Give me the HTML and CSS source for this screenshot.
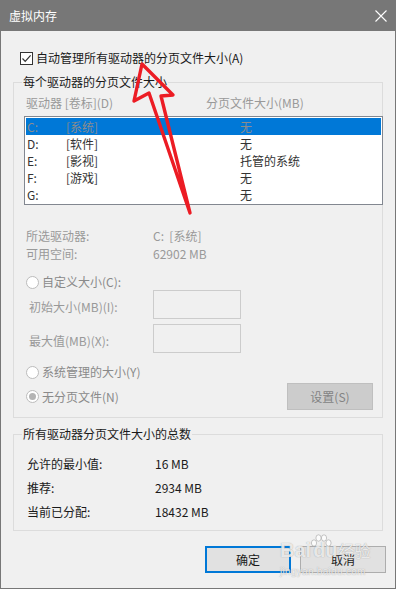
FILE: index.html
```html
<!DOCTYPE html>
<html lang="zh-CN">
	<head>
		<meta http-equiv="Content-Type" content="text/html; charset=utf-8" />
		<title>虚拟内存</title>
		<link rel="stylesheet" href="styles.css">
	</head>

	<body>
		<div class="window">
			<div class="titlebar">
				<span class="title">虚拟内存</span>
				<svg class="close" width="12" height="12" viewBox="0 0 12 12">
					<path d="M0.5 0.5 L11.5 11.5 M11.5 0.5 L0.5 11.5" stroke="#fff" stroke-width="1.1" fill="none" />
				</svg>
			</div>

			<div class="content">
				<label class="auto">
					<span class="checkbox">
						<svg width="11" height="11" viewBox="0 0 11 11">
							<path d="M1.5 5.5 L4.2 8.3 L9.6 2.3" stroke="#333" stroke-width="1.2" fill="none" />
						</svg>
					</span>
					自动管理所有驱动器的分页文件大小(A)
				</label>

				<!-- Per drive -->
				<fieldset class="group drives">
					<legend>每个驱动器的分页文件大小</legend>

					<div class="head">
						<span class="head-drive">驱动器 [卷标](D)</span>
						<span>分页文件大小(MB)</span>
					</div>

					<div class="listbox">
						<div class="row selected"><span class="c-drive">C:</span><span class="c-label">[系统]</span><span>无</span></div>
						<div class="row"><span class="c-drive">D:</span><span class="c-label">[软件]</span><span>无</span></div>
						<div class="row"><span class="c-drive">E:</span><span class="c-label">[影视]</span><span>托管的系统</span></div>
						<div class="row"><span class="c-drive">F:</span><span class="c-label">[游戏]</span><span>无</span></div>
						<div class="row"><span class="c-drive">G:</span><span class="c-label"></span><span>无</span></div>
					</div>

					<div class="info first"><span class="info-key">所选驱动器:</span><span>C:&nbsp;&nbsp;[系统]</span></div>
					<div class="info"><span class="info-key">可用空间:</span><span>62902 MB</span></div>

					<div class="radio-row custom"><span class="radio"></span>自定义大小(C):</div>
					<div class="size-row first"><span class="size-key">初始大小(MB)(I):</span><span class="textbox"></span></div>
					<div class="size-row"><span class="size-key">最大值(MB)(X):</span><span class="textbox"></span></div>
					<div class="radio-row managed"><span class="radio"></span>系统管理的大小(Y)</div>
					<div class="radio-row none">
						<span class="radio checked"></span>无分页文件(N)
						<span class="btn set">设置(S)</span>
					</div>
				</fieldset>

				<!-- Totals -->
				<fieldset class="group totals">
					<legend>所有驱动器分页文件大小的总数</legend>
					<div class="total"><span class="total-key">允许的最小值:</span><span>16 MB</span></div>
					<div class="total"><span class="total-key">推荐:</span><span>2934 MB</span></div>
					<div class="total"><span class="total-key">当前已分配:</span><span>18432 MB</span></div>
				</fieldset>

				<div class="buttons">
					<span class="btn ok">确定</span>
					<span class="btn">取消</span>
				</div>
			</div>

			<!-- red arrow drawn over the shot -->
			<svg class="arrow" width="396" height="589" viewBox="0 0 396 589">
				<path d="M142 64 L134 101 L149 93 L190 213 L161 96 L173 95 Z" stroke="#ec1c24" stroke-width="3.4" stroke-linejoin="round" fill="none" />
			</svg>

			<!-- watermark -->
			<div class="watermark">
				<div class="wm-line">
					<span>Bai</span>
					<svg class="paw" width="24" height="22" viewBox="0 0 24 22">
						<g fill="rgba(255,255,255,0.8)" stroke="rgba(140,140,140,0.6)" stroke-width="0.8">
							<ellipse cx="5" cy="9" rx="2.6" ry="3.2" />
							<ellipse cx="9.5" cy="4" rx="2.6" ry="3.2" />
							<ellipse cx="15" cy="4" rx="2.6" ry="3.2" />
							<ellipse cx="19.5" cy="9" rx="2.6" ry="3.2" />
						</g>
					</svg>
					<span class="wm-du">du</span>
					<span class="wm-cn">经验</span>
				</div>
				<div class="wm-url">jingyan.baidu.com</div>
			</div>
		</div>
	</body>
</html>
```

FILE: styles.css
```css
body {
	margin: 0;
}
.window {
	background-color: #f0f0f0;
	border: 1px solid #777;
	border-top: 0;
	box-sizing: border-box;
	color: #1a1a1a;
	font-family: "Noto Sans CJK SC", "Liberation Sans", sans-serif;
	font-size: 12px;
	height: 589px;
	overflow: hidden;
	position: relative;
	width: 396px;
}
.titlebar {
	align-items: center;
	background-color: #777;
	display: flex;
	height: 31px;
	justify-content: space-between;
	padding: 0 8px 0 8px;
}
.title {
	color: #fff;
	line-height: 31px;
}
.close {
	display: block;
}
.content {
	padding: 19px 0 0 12px;
}

/* checkbox */
.auto {
	align-items: center;
	display: flex;
	height: 16px;
	line-height: 16px;
	padding-left: 7px;
}
.checkbox {
	background-color: #fff;
	border: 1px solid #333;
	box-sizing: border-box;
	display: flex;
	height: 13px;
	justify-content: center;
	align-items: center;
	margin-right: 3px;
	width: 13px;
}
.checkbox svg {
	display: block;
}

/* group boxes */
.group {
	border: 1px solid #dcdcdc;
	box-sizing: border-box;
	margin: 8px 0 0 0;
	min-width: 0;
	width: 370px;
}
.group legend {
	line-height: 16px;
	margin-left: -4px;
	padding: 0 1px;
}
.drives {
	color: #999;
	padding: 5px 9px 7px 12px;
}
.drives legend {
	color: #1a1a1a;
}
.totals {
	padding: 10px 9px 6px 13px;
}
.totals legend {
	margin-left: -5px;
}

.head {
	display: flex;
	line-height: 16px;
}
.head-drive {
	width: 180px;
}

/* drive list */
.listbox {
	background-color: #fff;
	border: 1px solid #828790;
	box-sizing: border-box;
	color: #333;
	height: 89px;
	margin: 5px 0 0 -2px;
	padding: 1px 0;
	width: 359px;
}
.row {
	display: flex;
	height: 17px;
	line-height: 17px;
	padding-left: 2px;
}
.row.selected {
	background-color: #0078d7;
	color: #8c8c8c;
	margin: 0 1px;
	padding-left: 1px;
}
.c-drive {
	width: 39px;
}
.c-label {
	width: 174px;
}

.info {
	display: flex;
	line-height: 18px;
}
.info.first {
	margin-top: 22px;
}
.info-key {
	width: 127px;
}

/* radios */
.radio-row {
	align-items: center;
	color: #8a8a8a;
	display: flex;
	line-height: 16px;
}
.radio-row.custom {
	margin-top: 11px;
}
.radio-row.managed {
	margin-top: 11px;
}
.radio-row.none {
	height: 27px;
	margin-top: 3px;
}
.radio {
	align-items: center;
	background-color: #fff;
	border: 1px solid #bcbcbc;
	border-radius: 50%;
	box-sizing: border-box;
	display: flex;
	height: 13px;
	justify-content: center;
	margin-right: 3px;
	width: 13px;
}
.radio.checked::after {
	background-color: #b4b4b4;
	border-radius: 50%;
	content: "";
	height: 7px;
	width: 7px;
}

.size-row {
	align-items: center;
	display: flex;
	margin-top: 5px;
	padding-left: 3px;
}
.size-row.first {
	margin-top: 0;
}
.size-key {
	padding-top: 4px;
	width: 124px;
}
.textbox {
	background-color: #f0f0f0;
	border: 1px solid #ccc;
	box-sizing: border-box;
	height: 29px;
	width: 88px;
}

/* buttons */
.btn {
	align-items: center;
	background-color: #e1e1e1;
	border: 1px solid #adadad;
	box-sizing: border-box;
	color: #1a1a1a;
	display: flex;
	height: 27px;
	justify-content: center;
	width: 86px;
}
.btn.set {
	background-color: #ccc;
	border-color: #bfbfbf;
	color: #838383;
	margin-left: auto;
}
.btn.ok {
	border: 2px solid #0078d7;
}
.buttons {
	display: flex;
	gap: 9px;
	justify-content: flex-end;
	margin: 15px 9px 0 0;
}

.total {
	display: flex;
	line-height: 24px;
}
.total-key {
	width: 128px;
}

/* overlays */
.arrow {
	left: -1px;
	pointer-events: none;
	position: absolute;
	top: 0;
}
.watermark {
	color: rgba(255, 255, 255, 0.8);
	font-family: "Liberation Sans", sans-serif;
	left: 279px;
	pointer-events: none;
	position: absolute;
	text-shadow: 0 0 1px rgba(110, 110, 110, 0.7);
	top: 534px;
}
.wm-line {
	align-items: flex-end;
	display: flex;
	font-size: 20px;
	font-weight: bold;
	height: 28px;
	position: relative;
}
.paw {
	left: 29px;
	position: absolute;
	top: 0;
}
.wm-du {
	margin-left: 2px;
}
.wm-cn {
	font-family: "Noto Sans CJK SC", sans-serif;
	font-size: 16px;
	font-weight: normal;
	margin-left: 1px;
}
.wm-url {
	font-size: 10px;
	letter-spacing: 0.3px;
	margin-top: 4px;
}
```
